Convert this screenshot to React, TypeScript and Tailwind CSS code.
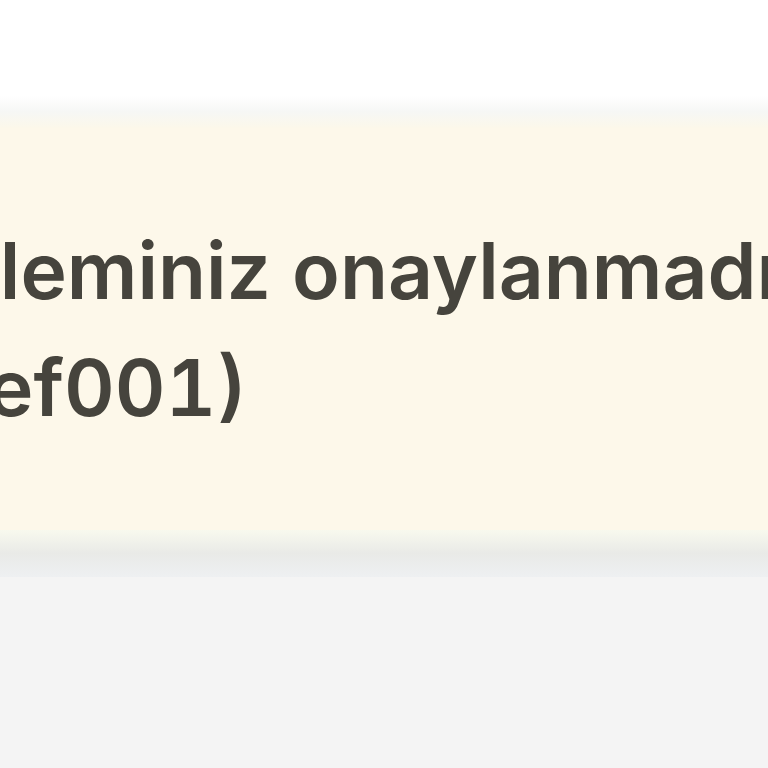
import React from "react";

export default function App() {
  return (
    <div className="w-[768px] h-[768px] overflow-hidden bg-[#f4f4f4] flex flex-col" style={{ fontFamily: "Inter, 'Noto Sans', sans-serif" }}>
      <div className="h-[96px] bg-white shrink-0" />
      <div className="h-[32px] shrink-0 bg-gradient-to-b from-white via-[#f6f7f5] to-[#fcf8ea]" />
      <div className="h-[402px] shrink-0 bg-[#fdf8ea] overflow-hidden">
        <div className="mt-[84px] w-[1200px] text-[78.5px] leading-[117px] font-semibold text-[#46443d] tabular-nums blur-[0.4px]">
          <p className="ml-[-65px]">İşleminiz onaylanmadı</p>
          <p className="ml-[-73px]">(ref001)</p>
        </div>
      </div>
      <div className="h-[47px] shrink-0 bg-gradient-to-b from-[#f8f9ee] via-[#e9eae7] to-[#eef0f2]" />
      <div className="flex-1 bg-[#f4f4f4]" />
    </div>
  );
}
